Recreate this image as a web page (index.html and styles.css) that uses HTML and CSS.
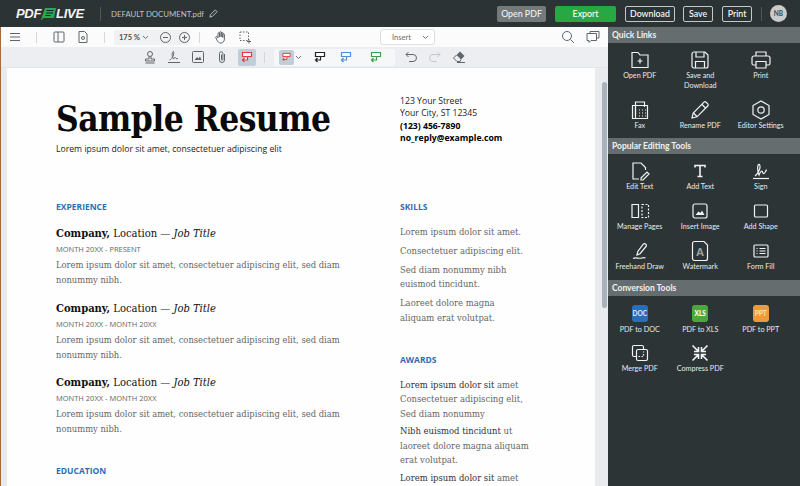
FILE: index.html
```html
<!DOCTYPE html>
<html lang="en">
<head>
<meta charset="utf-8">
<title>PDF Live</title>
<link rel="stylesheet" href="styles.css">
</head>
<body>
<svg class="defs" width="0" height="0">
<defs>
<g id="redo-shape"><path d="M3.500 2.500h9v4h-9z"/><path d="M8.500 6.500v3.500H3.500M5.500 8l-2 2 2 2"/></g>
</defs>
</svg>
<div class="app">
  <header class="topbar">
    <div class="logo"><span>PDF</span><svg class="logo-mark" width="15" height="14" viewBox="0 0 15 14"><path d="M4 1h11l-2 10H2l-1 2H0z" fill="#2aa850"/><path d="M5.500 3.500h7M5 6h7M4.500 8.500h5" stroke="#123" stroke-width="1"/></svg><span>LIVE</span></div>
    <div class="vsep dark"></div>
    <div class="docname">DEFAULT DOCUMENT.pdf</div>
    <svg class="pencil" width="9" height="9" viewBox="0 0 10 10"><path d="M1 9l.6-2.600L7 1l2 2-5.400 5.400z" fill="none" stroke="#c8cccc" stroke-width="1"/></svg>
    <div class="spacer"></div>
    <button class="tbtn open">Open PDF</button>
    <button class="tbtn export">Export</button>
    <button class="tbtn outline download">Download</button>
    <button class="tbtn outline save">Save</button>
    <button class="tbtn outline print">Print</button>
    <div class="vsep dark right"></div>
    <div class="avatar">NB</div>
  </header>
  <div class="body">
    <main class="main">
      <div class="tools-one">
        <svg class="ic burger" width="14" height="14" viewBox="0 0 14 14"><path d="M2 3.500h10M2 7h10M2 10.500h10"/></svg>
        <div class="vsep"></div>
        <svg class="ic panel-ic" width="14" height="14" viewBox="0 0 14 14"><rect x="2" y="2" width="10" height="10" rx="1"/><path d="M6 2v10"/></svg>
        <svg class="ic page-ic" width="14" height="14" viewBox="0 0 14 14"><path d="M3 1.500h5.500L11 4v8.500H3z"/><circle cx="7" cy="8" r="1.500"/></svg>
        <div class="vsep"></div>
        <div class="zoombox">
          <span class="pct">175 %</span>
          <svg class="chev" width="7" height="5" viewBox="0 0 7 5"><path d="M1 1l2.500 2.500L6 1"/></svg>
          <svg class="ic zo" width="13" height="13" viewBox="0 0 13 13"><circle cx="6.500" cy="6.500" r="5"/><path d="M4 6.500h5"/></svg>
          <svg class="ic zi" width="13" height="13" viewBox="0 0 13 13"><circle cx="6.500" cy="6.500" r="5"/><path d="M4 6.500h5M6.500 4v5"/></svg>
        </div>
        <div class="vsep"></div>
        <svg class="ic hand" width="14" height="14" viewBox="0 0 14 14"><path d="M4 8V3.500a.8.800 0 0 1 1.600 0V7M5.600 7V2.500a.8.800 0 0 1 1.600 0V7M7.200 7V3a.8.800 0 0 1 1.600 0v4.500M8.800 7.500V4.500a.8.800 0 0 1 1.600 0V9c0 2.500-1.500 4-3.500 4-2 0-3-1-4-3L1.800 7.500c-.4-1 .9-1.500 1.500-.7L4 8"/></svg>
        <svg class="ic select" width="14" height="14" viewBox="0 0 14 14"><path d="M2 2h8.500v8.500H2z" stroke-dasharray="1.500 1.500"/><path d="M11 9.500v4M9 11.500h4"/></svg>
        <div class="insert"><span>Insert</span><svg class="chev" width="7" height="5" viewBox="0 0 7 5"><path d="M1 1l2.500 2.500L6 1"/></svg></div>
        <div class="spacer"></div>
        <svg class="ic search" width="14" height="14" viewBox="0 0 14 14"><circle cx="6" cy="6" r="4.500"/><path d="M9.500 9.500L13 13"/></svg>
        <svg class="ic comment" width="14" height="14" viewBox="0 0 14 14"><path d="M4 3.500V1.500h9v6.500h-2"/><path d="M1 3.500h9.500v7H5l-2 2v-2H1z"/></svg>
      </div>
      <div class="tools-two">
        <svg class="ic stamp" width="14" height="14" viewBox="0 0 14 14"><circle cx="7" cy="4" r="2.500"/><path d="M6 6.500V9H2.500v2h9V9H8V6.500M2.500 13h9"/></svg>
        <svg class="ic" width="14" height="14" viewBox="0 0 14 14"><path d="M1 12.500h12M2.500 10c3-1 5-6 4-8.500-1.500 0-2 5 0 7.500.8-1.500 1.800-2 2.300-1 .3.800 1 1 2.200.3"/></svg>
        <svg class="ic" width="14" height="14" viewBox="0 0 14 14"><rect x="1.500" y="1.500" width="11" height="11" rx="1"/><path class="fillgrey" d="M3.500 10l2.500-3 1.500 1.500 1.500-2 1.500 3.500z"/></svg>
        <svg class="ic" width="14" height="14" viewBox="0 0 14 14"><path d="M9.500 4v6a2.500 2.500 0 0 1-5 0V3.500a1.700 1.700 0 0 1 3.400 0V9.500a.7.700 0 0 1-1.400 0V4.500"/></svg>
        <div class="active-tool"><svg class="redo red" width="16" height="14" viewBox="0 0 16 14"><use href="#redo-shape"/></svg></div>
        <div class="vsep"></div>
        <div class="colorgroup">
          <div class="active-small"><svg class="redo red" width="16" height="14" viewBox="0 0 16 14"><use href="#redo-shape"/></svg></div>
          <svg class="chev" width="7" height="5" viewBox="0 0 7 5"><path d="M1 1l2.500 2.500L6 1"/></svg>
          <svg class="redo black" width="16" height="14" viewBox="0 0 16 14"><use href="#redo-shape"/></svg>
          <svg class="redo blue" width="16" height="14" viewBox="0 0 16 14"><use href="#redo-shape"/></svg>
          <svg class="redo green" width="16" height="14" viewBox="0 0 16 14"><use href="#redo-shape"/></svg>
        </div>
        <svg class="ic undo" width="14" height="14" viewBox="0 0 14 14"><path d="M4.500 2L2 4.500 4.500 7M2 4.500h7a3.500 3.500 0 0 1 0 7H5"/></svg>
        <svg class="ic redo-dim" width="14" height="14" viewBox="0 0 14 14"><path d="M9.500 2L12 4.500 9.500 7M12 4.500H5a3.500 3.500 0 0 0 0 7h4"/></svg>
        <svg class="ic eraser" width="14" height="14" viewBox="0 0 14 14"><path class="fillgrey" d="M8 1.500l4.500 4.500-3.500 3.500L4.500 5z"/><path d="M4.500 5L1.500 8 5 11.500h3L9 9.500M5 12.500h8"/></svg>
      </div>
      <div class="viewer">
        <article class="page">
          <div class="top">
            <div class="top-left">
              <h1>Sample Resume</h1>
              <p class="tagline">Lorem ipsum dolor sit amet, consectetuer adipiscing elit</p>
            </div>
            <div class="address">
              <div>123 Your Street</div>
              <div>Your City, ST 12345</div>
              <div class="b">(123) 456-7890</div>
              <div class="b">no_reply@example.com</div>
            </div>
          </div>
          <div class="cols">
            <div class="col-main">
              <h2>EXPERIENCE</h2>
              <section class="job">
                <h3><b>Company,</b> Location — <i>Job Title</i></h3>
                <div class="date">MONTH 20XX - PRESENT</div>
                <p>Lorem ipsum dolor sit amet, consectetuer adipiscing elit, sed diam nonummy nibh.</p>
              </section>
              <section class="job">
                <h3><b>Company,</b> Location — <i>Job Title</i></h3>
                <div class="date">MONTH 20XX - MONTH 20XX</div>
                <p>Lorem ipsum dolor sit amet, consectetuer adipiscing elit, sed diam nonummy nibh.</p>
              </section>
              <section class="job">
                <h3><b>Company,</b> Location — <i>Job Title</i></h3>
                <div class="date">MONTH 20XX - MONTH 20XX</div>
                <p>Lorem ipsum dolor sit amet, consectetuer adipiscing elit, sed diam nonummy nibh.</p>
              </section>
              <h2 class="edu">EDUCATION</h2>
            </div>
            <div class="col-side">
              <h2>SKILLS</h2>
              <p>Lorem ipsum dolor sit amet.</p>
              <p>Consectetuer adipiscing elit.</p>
              <p>Sed diam nonummy nibh euismod tincidunt.</p>
              <p>Laoreet dolore magna<br>aliquam erat volutpat.</p>
              <h2 class="awards">AWARDS</h2>
              <div class="award-list">
                <p><b>Lorem ipsum dolor sit</b> amet Consectetuer adipiscing elit, Sed diam nonummy</p>
                <p><b>Nibh euismod tincidunt</b> ut laoreet dolore magna aliquam erat volutpat.</p>
                <p><b>Lorem ipsum dolor sit</b> amet</p>
              </div>
            </div>
          </div>
        </article>
        <div class="scrollbar"><div class="thumb"></div></div>
      </div>
    </main>
    <aside class="side">
      <div class="sect">Quick Links</div>
      <div class="grid quick">
        <div class="item"><svg width="22" height="22" viewBox="0 0 22 22"><path d="M3 18.500V3.500h6l2 2.500h8v12.500z"/><path d="M11 9.500v5M8.500 12h5"/></svg><span>Open PDF</span></div>
        <div class="item"><svg width="22" height="22" viewBox="0 0 22 22"><path d="M3 5a2 2 0 0 1 2-2h11l3 3v11a2 2 0 0 1-2 2H5a2 2 0 0 1-2-2z"/><path d="M7 3v5h8V3M6.500 19v-6.500h9V19"/></svg><span>Save and<br>Download</span></div>
        <div class="item"><svg width="22" height="22" viewBox="0 0 22 22"><path d="M6 7V3h10v4M6 16H3.500a1.500 1.500 0 0 1-1.500-1.500V9a2 2 0 0 1 2-2h14a2 2 0 0 1 2 2v5.500a1.500 1.500 0 0 1-1.500 1.500H16"/><path d="M6 12.500h10V19H6z"/></svg><span>Print</span></div>
        <div class="item"><svg width="22" height="22" viewBox="0 0 22 22"><path d="M6.500 6.500H3.500v13h15v-13H6.500"/><path d="M6.500 17V3h9v5"/><path d="M6.500 6.500V19.500" /><path class="dots" d="M10 11h1M13 11h1M16 11h1M10 14h1M13 14h1M16 14h1M10 17h1M13 17h1M16 17h1"/></svg><span>Fax</span></div>
        <div class="item"><svg width="22" height="22" viewBox="0 0 22 22"><path d="M3 19l1.200-5L15 3.200a1.500 1.500 0 0 1 2.100 0l1.700 1.700a1.500 1.500 0 0 1 0 2.100L8 17.800z"/><path d="M13 5.500l3.500 3.500M4.500 14l3.500 3.500"/></svg><span>Rename PDF</span></div>
        <div class="item"><svg width="22" height="22" viewBox="0 0 22 22"><path d="M11 2l8 4.500v9L11 20l-8-4.500v-9z"/><circle cx="11" cy="11" r="3.200"/></svg><span>Editor Settings</span></div>
      </div>
      <div class="sect">Popular Editing Tools</div>
      <div class="grid popular">
        <div class="item"><svg width="22" height="22" viewBox="0 0 22 22"><path d="M10 19H4V3h8l4.500 4.500V10"/><path d="M12 18l6-6 2 2-6 6h-2z"/></svg><span>Edit Text</span></div>
        <div class="item"><svg width="22" height="22" viewBox="0 0 22 22"><path class="thick" d="M6 7.500V5.500h10v2M11 5.500v11M8.500 16.500h5"/></svg><span>Add Text</span></div>
        <div class="item"><svg width="22" height="22" viewBox="0 0 22 22"><path d="M3 18.500h16"/><path d="M5 16c4-3 6-9 4.500-11.500C8 3 6.500 9 9 15c1-3 3-5 3.500-3 .3 2 1.500 2 2.500 .5.500-1 1-1 1.500-3"/></svg><span>Sign</span></div>
        <div class="item"><svg width="22" height="22" viewBox="0 0 22 22"><path d="M3 4.500h6.500v13H3z"/><path d="M13 4.500h6.500v13H13z" stroke-dasharray="2 1.500"/></svg><span>Manage Pages</span></div>
        <div class="item"><svg width="22" height="22" viewBox="0 0 22 22"><rect x="4" y="4" width="14" height="14" rx="2"/><path class="fillw" d="M6.500 15l3-3.500 2 1.500 1.500-2.500 2.500 4.500z"/></svg><span>Insert Image</span></div>
        <div class="item"><svg width="22" height="22" viewBox="0 0 22 22"><rect x="4.500" y="5" width="13" height="12" rx="1"/></svg><span>Add Shape</span></div>
        <div class="item"><svg width="22" height="22" viewBox="0 0 22 22"><path d="M8 15l.8-3.500L14.500 4a1.400 1.400 0 0 1 2 0l.5.500a1.400 1.400 0 0 1 0 2l-6 7.200z"/><path d="M4 18.500c3-1.500 5 .5 9-.5 1.500-.400 2.500-.400 3.500 0"/></svg><span>Freehand Draw</span></div>
        <div class="item"><svg width="22" height="22" viewBox="0 0 22 22"><path d="M3.500 3.500a2 2 0 0 1 2-2h9.500l3.500 3.500V18.500a2 2 0 0 1-2 2h-11a2 2 0 0 1-2-2z"/><text class="wm" x="11" y="16" text-anchor="middle">A</text></svg><span>Watermark</span></div>
        <div class="item"><svg width="22" height="22" viewBox="0 0 22 22"><rect x="4" y="5" width="14" height="12" rx="1"/><path d="M6.500 8.500h1M9.500 8.500h6M6.500 11h1M9.500 11h6M6.500 13.500h1M9.500 13.500h6"/></svg><span>Form Fill</span></div>
      </div>
      <div class="sect">Conversion Tools</div>
      <div class="grid conv">
        <div class="item"><div class="badge doc">DOC</div><span>PDF to DOC</span></div>
        <div class="item"><div class="badge xls">XLS</div><span>PDF to XLS</span></div>
        <div class="item"><div class="badge ppt">PPT</div><span>PDF to PPT</span></div>
        <div class="item"><svg width="22" height="22" viewBox="0 0 22 22"><path d="M7.500 14.500H5A1.500 1.500 0 0 1 3.500 13V5A1.500 1.500 0 0 1 5 3.500h8A1.500 1.500 0 0 1 14.500 5v2.500"/><rect x="7.500" y="7.500" width="11" height="11" rx="1.500"/><path d="M9.500 14.500h5v-5" stroke-dasharray="1.500 1.500"/></svg><span>Merge PDF</span></div>
        <div class="item"><svg width="22" height="22" viewBox="0 0 22 22"><path class="thick" d="M3.500 3.500L9 9M5 9.500h4.500V5M18.500 3.500L13 9M17 9.500h-4.500V5M3.500 18.500L9 13M5 12.500h4.500V17M18.500 18.500L13 13M17 12.500h-4.500V17"/></svg><span>Compress PDF</span></div>
      </div>
    </aside>
  </div>
</div>
</body>
</html>
```
FILE: styles.css
```css
* { box-sizing: border-box; }
html, body { margin: 0; height: 100%; overflow: hidden; }
body { font-family: Lato, "Noto Sans", sans-serif; background: #2d3436; }
.defs { position: absolute; }
.app { width: 800px; height: 486px; display: flex; flex-direction: column; overflow: hidden; }
.spacer { flex: 1; }
svg { display: block; flex: none; }

.topbar { height: 27px; background: #2c3335; display: flex; align-items: center; padding: 0 13px 0 16px; color: #fff; flex: none; }
.logo { display: flex; align-items: center; font: italic 700 13px "Liberation Sans", sans-serif; color: #f4f5f5; width: 84px; letter-spacing: -.3px; }
.vsep { width: 1px; height: 14px; background: #d6d8dc; flex: none; }
.vsep.dark { background: #4f5759; }
.docname { margin-left: 10px; font-size: 7.800px; color: #bfc4c5; white-space: nowrap; }
.pencil { margin-left: 5px; }
.tbtn { font: 500 8.800px Lato, sans-serif; height: 16px; padding: 0; border: 0; border-radius: 2px; color: #fff; margin-left: 9px; }
.open { width: 49px; background: #747a7c; color: #f2f2f2; margin-left: 0; }
.export { width: 61px; background: #28a745; }
.outline { background: transparent; border: 1px solid #c4c8c9; }
.download { width: 50px; }
.save { width: 30px; margin-left: 8px; }
.print { width: 30px; margin-left: 9px; }
.vsep.right { margin: 0 8px 0 9px; }
.avatar { width: 17px; height: 17px; border-radius: 50%; background: #c9cbcc; color: #444; font-size: 6.500px; font-weight: 700; display: flex; align-items: center; justify-content: center; }

.body { flex: 1; display: flex; min-height: 0; }
.main { width: 608px; display: flex; flex-direction: column; background: #e9ebef; min-width: 0; border-left: 1px solid #a86a3a; }

.ic { fill: none; stroke: #5f666b; stroke-width: 1; }
.ic .fillgrey { fill: #5f666b; stroke: none; }
.chev { fill: none; stroke: #6c7277; stroke-width: 1; }

.tools-one { height: 20px; background: #fbfbfc; display: flex; align-items: center; padding: 0 8px 0 7px; flex: none; }
.tools-one .vsep { height: 11px; background: #d5d7da; }
.burger { margin-right: 14px; }
.panel-ic { margin-left: 15px; }
.page-ic { margin: 0 14px 0 10px; }
.zoombox { display: flex; align-items: center; height: 15px; width: 75px; margin: 0 10px 0 9px; background: #f0f1f3; border-radius: 2px; padding-left: 5px; color: #4c5257; font-size: 7.500px; font-weight: 700; white-space: nowrap; }
.pct { margin-right: 2px; }
.zo { margin-left: 10px; }
.zi { margin-left: 6px; }
.hand { margin-left: 14px; }
.select { margin-left: 10px; }
.insert { width: 55px; height: 16px; margin-left: 128px; border: 1px solid #dcdee1; border-radius: 3px; background: #fff; font-size: 7.500px; color: #666c71; display: flex; align-items: center; justify-content: space-between; padding: 0 5px 0 11px; }
.search { margin-right: 11px; }

.tools-two { height: 21px; display: flex; align-items: center; justify-content: flex-start; padding-left: 142px; background: #eceef1; flex: none; border-bottom: 1px solid #e2e4e7; }
.tools-two > .ic { margin-right: 10px; }
.active-tool { width: 18px; height: 17px; background: #c3cdd8; border-radius: 2px; display: flex; align-items: center; justify-content: center; margin-right: 8px; margin-left: -1px; }
.tools-two .vsep { height: 11px; background: #d3d5d9; margin-right: 9px; }
.colorgroup { display: flex; align-items: center; width: 121px; height: 17px; background: #f6f7f8; border-radius: 2px; padding-left: 5px; margin-right: 9px; }
.active-small { width: 15px; height: 15px; background: #c3cdd8; border-radius: 2px; display: flex; align-items: center; justify-content: center; }
.active-small .redo { width: 13px; height: 12px; }
.colorgroup .chev { margin: 0 10px 0 1px; }
.colorgroup .black { margin-right: 10px; }
.colorgroup .blue { margin-right: 14px; }
.redo { fill: #fff; stroke-width: 1.200; }
.red { stroke: #e5393f; }
.black { stroke: #1f2326; }
.blue { stroke: #4a90e2; }
.green { stroke: #36a04a; }
.tools-two > .redo-dim { stroke: #c5c9cd; }

.viewer { flex: 1; display: flex; min-height: 0; background: #e9ebef; padding-left: 6px; overflow: hidden; }
.page { width: 588px; background: #fefefe; padding: 26px 48px 0 49px; color: #111; overflow: hidden; flex: none; }
.scrollbar { flex: 1; position: relative; }
.thumb { width: 5px; margin: 14px 0 0 7px; height: 226px; background: #aab2bd; border-radius: 3px; }

.top { display: flex; }
.top-left { width: 344px; }
h1 { margin: 2px 0 0; font: 700 35px/46px "DejaVu Serif Condensed", "DejaVu Serif", serif; font-stretch: condensed; color: #0a0a0a; letter-spacing: -.55px; white-space: nowrap; }
.tagline { margin: 0; font: 400 8.660px/14px "Open Sans", sans-serif; color: #222; white-space: nowrap; }
.address { font: 400 8.660px/12.300px "Open Sans", sans-serif; color: #222; padding-top: 1px; }
.address .b { font-weight: 700; color: #000; }

.cols { display: flex; margin-top: 44px; }
.col-main { width: 344px; padding-right: 40px; }
.col-side { width: 135px; font: 300 9.400px/14.500px "DejaVu Serif Condensed", "DejaVu Serif", serif; font-stretch: condensed; color: #666; }
h2 { margin: 0 0 12px; font: 700 8.500px/14px "Open Sans", sans-serif; color: #2e6db5; }
.col-side h2 { margin-bottom: 10.500px; }
.col-side p { margin: 0 0 4.500px; }
.col-side b { color: #333; }
.col-side .awards { margin-top: 28px; }
.award-list p { margin-bottom: 3px; }
.job { margin-bottom: 13.500px; }
h3 { margin: 0; font: 400 11.100px/16px "DejaVu Serif Condensed", "DejaVu Serif", serif; font-stretch: condensed; color: #111; }
.date { font: 400 7.500px/15px "Open Sans", sans-serif; color: #666; }
.job p { margin: 0; font: 300 9.300px/15px "DejaVu Serif Condensed", "DejaVu Serif", serif; font-stretch: condensed; color: #666; }
.edu { margin-top: 27.500px; }

.side { flex: 1; background: #2d3436; color: #e8eaea; min-width: 0; }
.sect { height: 16px; background: #666d6f; font-size: 8.500px; font-weight: 700; line-height: 16px; padding-left: 4px; color: #f0f1f1; }
.grid { display: grid; grid-template-columns: repeat(3, 60.500px); padding-left: 1.500px; justify-content: start; }
.item { display: flex; flex-direction: column; align-items: center; text-align: center; font-size: 7.200px; line-height: 10px; white-space: nowrap; }
.item svg { fill: none; stroke: #f2f3f3; stroke-width: 1.200; }
.item svg .thick { stroke-width: 1.600; }
.item svg .fillw { fill: #f2f3f3; stroke: none; }
.item svg .wm { fill: #9aa0a2; stroke: none; font: 700 11px "Noto Sans", sans-serif; }
.quick { padding-top: 6px; grid-template-rows: 50px 39px; height: 95px; }
.popular { padding-top: 6px; grid-template-rows: 40px 40px 40px; height: 126px; }
.conv { padding-top: 9px; grid-template-rows: 37px 40px; }
.badge { width: 16px; height: 17px; border-radius: 3px; margin: 0 0 3px; font-size: 6.500px; font-weight: 900; display: flex; align-items: center; justify-content: center; color: #fff; }
.doc { background: #2a6db8; color: #cfe3f8; }
.xls { background: #4aa83f; }
.ppt { background: #ee9a3a; color: #fbe0a8; }
```
